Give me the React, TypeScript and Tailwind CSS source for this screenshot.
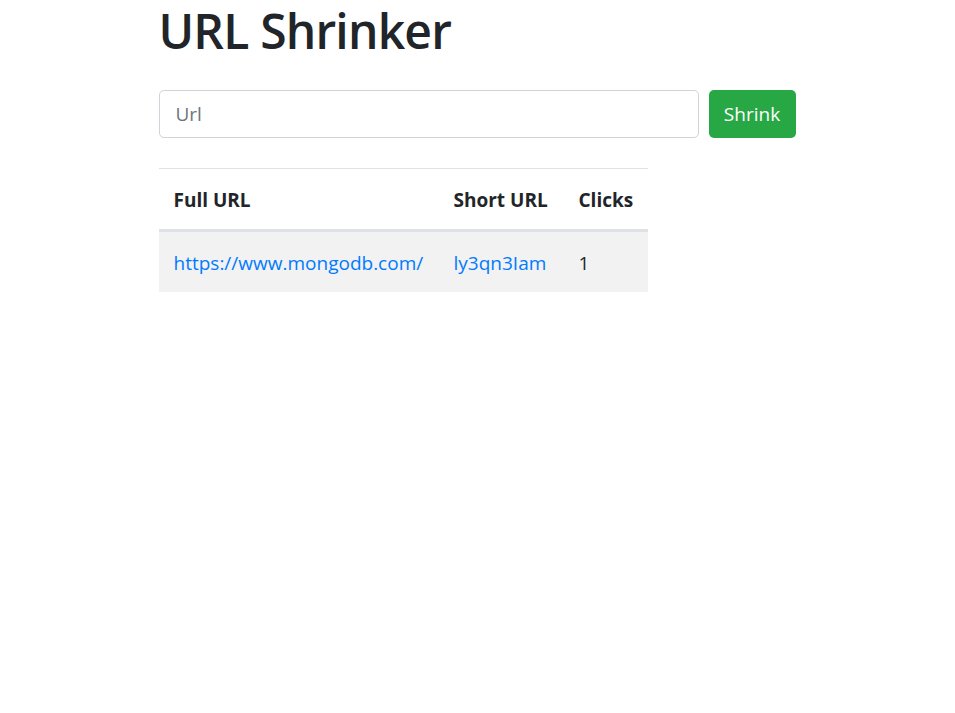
export default function App() {
  const rows = [
    { full: "https://www.mongodb.com/", short: "ly3qn3Iam", clicks: 1 },
  ];

  return (
    <div className="min-h-screen bg-white text-[#212529] font-['Open_Sans',sans-serif] text-[19px] leading-[30px]">
      <div className="w-[638px] mx-auto">
        <h1 className="text-[48px] leading-[60px] pt-[1px] font-semibold tracking-[-0.8px] m-0">URL Shrinker</h1>

        <form className="flex items-center mt-[29px]" onSubmit={(e) => e.preventDefault()}>
          <input
            type="url"
            placeholder="Url"
            className="w-[540px] h-[48px] px-[16px] border border-[#ced4da] rounded-[5px] text-[19px] placeholder:text-[#6c757d] outline-none"
          />
          <button
            type="submit"
            className="ml-[10px] w-[87px] h-[48px] bg-[#28a745] text-white rounded-[5px] text-[19px]"
          >
            Shrink
          </button>
        </form>

        <table className="mt-[30px] w-[489px] table-fixed border-collapse text-left whitespace-nowrap">
          <thead>
            <tr className="border-t border-[#dee2e6] border-b-[3px]">
              <th className="w-[280px] h-[62px] px-[15px] pt-[2px] font-bold">Full URL</th>
              <th className="w-[125px] h-[62px] px-[15px] pt-[2px] font-bold">Short URL</th>
              <th className="w-[84px] h-[62px] px-[15px] pt-[2px] font-bold">Clicks</th>
            </tr>
          </thead>
          <tbody>
            {rows.map((r) => (
              <tr key={r.short} className="bg-[#f2f2f2]">
                <td className="h-[61px] px-[15px] pt-[2px]">
                  <a href={r.full} className="text-[#007bff]">{r.full}</a>
                </td>
                <td className="h-[61px] px-[15px] pt-[2px]">
                  <a href={r.short} className="text-[#007bff]">{r.short}</a>
                </td>
                <td className="h-[61px] px-[15px] pt-[2px]">{r.clicks}</td>
              </tr>
            ))}
          </tbody>
        </table>
      </div>
    </div>
  );
}
